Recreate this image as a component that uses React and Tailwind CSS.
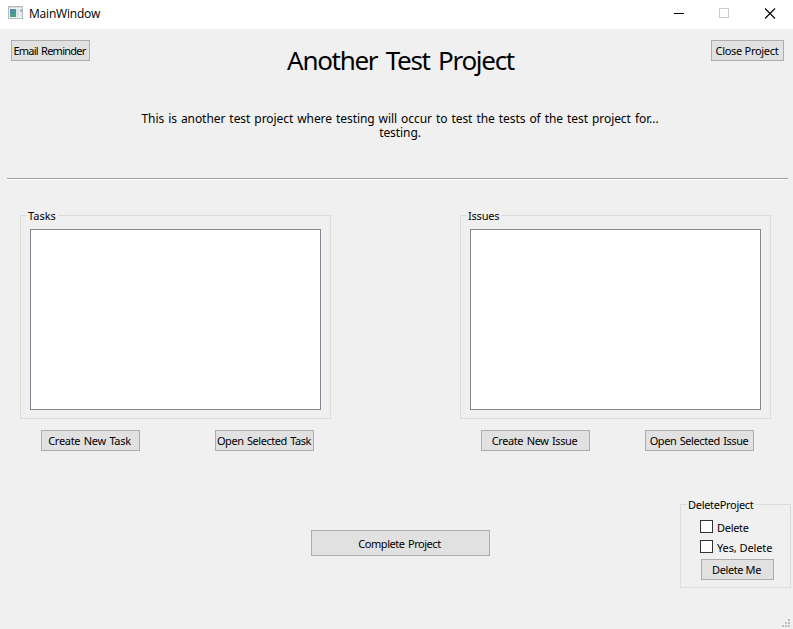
const btn =
  "flex shrink-0 items-center justify-center overflow-hidden whitespace-nowrap border border-[#adadad] bg-[#e1e1e1] text-[11px] leading-[15px]";

function Button({ className, textClass = "", children }) {
  return (
    <button className={`${btn} ${className}`}>
      <span className={textClass}>{children}</span>
    </button>
  );
}

function TitleBar() {
  return (
    <header className="flex h-[29px] items-start bg-white">
      <svg className="ml-2 mt-[6px] shrink-0" width="16" height="14" shapeRendering="crispEdges">
        <defs>
          <linearGradient id="pane" x1="0" y1="0" x2="0.6" y2="1">
            <stop offset="0" stopColor="#5585b5" />
            <stop offset="1" stopColor="#46a67c" />
          </linearGradient>
        </defs>
        <rect x="0.5" y="0.5" width="14" height="12" fill="#f4f6f6" stroke="#b4babd" />
        <rect x="1" y="1" width="13" height="1" fill="#d5dadc" />
        <rect x="2" y="3" width="6" height="8" fill="url(#pane)" />
        <rect x="8" y="3" width="3" height="8" fill="#dfe4e4" />
        <rect x="12" y="3" width="2" height="3" fill="#9cc4c4" />
        <rect x="12" y="6" width="2" height="5" fill="#e6eaea" />
      </svg>
      <span className="ml-[5px] mt-[5px] font-['Open_Sans',sans-serif] text-[12px] leading-[18px] tracking-[-0.2px]">MainWindow</span>
      <svg className="ml-auto mr-[17px] mt-2 shrink-0" width="102" height="11" fill="none">
        <path d="M0 5.5H10" stroke="#000" />
        <rect x="45.5" y="0.5" width="9" height="9" stroke="#ccc" />
        <path d="M91 0.5L101 10.5M101 0.5L91 10.5" stroke="#000" strokeWidth="1.1" />
      </svg>
    </header>
  );
}

function GroupBox({ title, className, titleClass = "", children }) {
  return (
    <section className={`border border-[#dcdcdc] ${className}`}>
      <h2 className="-mt-[8px] ml-[6px] h-[15px] w-fit whitespace-nowrap bg-[#f0f0f0] pl-px pr-[2px] text-[11px] leading-[15px]">
        <span className={titleClass}>{title}</span>
      </h2>
      {children}
    </section>
  );
}

function Check({ label, className = "", textClass = "" }) {
  return (
    <label className={`flex h-[13px] items-center text-[11px] ${className}`}>
      <span className="size-[13px] shrink-0 border border-[#333] bg-white" />
      <span className={`ml-1 mt-[2px] whitespace-nowrap leading-[15px] ${textClass}`}>{label}</span>
    </label>
  );
}

function SizeGrip() {
  return (
    <svg className="ml-auto mr-[3px] mt-[31px]" width="8" height="8" fill="#bfbfbf" shapeRendering="crispEdges">
      <path d="M6 0h2v2h-2zM3 3h2v2h-2zM6 3h2v2h-2zM0 6h2v2h-2zM3 6h2v2h-2zM6 6h2v2h-2z" />
    </svg>
  );
}

export default function App() {
  return (
    <div className="h-[629px] w-[793px] overflow-hidden bg-[#f0f0f0] font-['Noto_Sans',sans-serif] text-black">
      <TitleBar />
      <main className="flex h-[600px] flex-col">
        <div className="flex h-[83px] items-start justify-between pl-[11px] pr-[9px] pt-[11px]">
          <Button className="h-[21px] w-[79px] pr-[2px]" textClass="tracking-[-0.75px] [word-spacing:1px]">Email Reminder</Button>
          <h1 className="whitespace-nowrap text-[26px] leading-[40px] tracking-[-1.3px] [word-spacing:3px]">Another Test Project</h1>
          <Button className="h-[21px] w-[73px] pr-px" textClass="tracking-[-0.3px]">Close Project</Button>
        </div>
        <p className="h-[66px] pl-[7px] text-center text-[12px] leading-[14px] [word-spacing:1px] tracking-[-0.07px]">
          This is another test project where testing will occur to test the tests of the test project for...
          <br />
          testing.
        </p>
        <hr className="ml-[7px] mr-[5px] h-[2px] border-0 border-t border-[#a0a0a0] bg-white" />

        <div className="mt-[35px] flex gap-[129px] pl-5">
          <div className="w-[311px]">
            <GroupBox title="Tasks" className="h-[204px]">
              <div className="ml-[9px] mt-[6px] h-[181px] w-[291px] border border-[#828790] bg-white" />
            </GroupBox>
            <div className="mt-[11px] flex justify-between pl-[21px] pr-[17px]">
              <Button className="h-[21px] w-[99px] pr-[2px]" textClass="tracking-[-0.3px] [word-spacing:1px]">Create New Task</Button>
              <Button className="h-[21px] w-[99px]" textClass="-ml-px tracking-[-0.45px] [word-spacing:1px]">Open Selected Task</Button>
            </div>
          </div>
          <div className="w-[311px]">
            <GroupBox title="Issues" titleClass="tracking-[-0.2px]" className="h-[204px]">
              <div className="ml-[9px] mt-[6px] h-[181px] w-[291px] border border-[#828790] bg-white" />
            </GroupBox>
            <div className="mt-[11px] flex justify-between pl-[21px] pr-[17px]">
              <Button className="h-[21px] w-[109px] pr-[2px]" textClass="tracking-[-0.38px] [word-spacing:1px]">Create New Issue</Button>
              <Button className="h-[21px] w-[109px] pr-px" textClass="tracking-[-0.43px] [word-spacing:1px]">Open Selected Issue</Button>
            </div>
          </div>
        </div>

        <div className="mt-[53px] flex items-start pl-[311px]">
          <Button className="mt-[26px] h-[26px] w-[179px] pr-[2px]" textClass="tracking-[-0.46px] [word-spacing:1px]">Complete Project</Button>
          <GroupBox title="DeleteProject" titleClass="tracking-[-0.3px]" className="ml-[190px] h-[84px] w-[111px]">
            <div className="pl-[19px] pt-[8px]">
              <Check label="Delete" textClass="tracking-[-0.3px]" />
              <Check label="Yes, Delete" className="mt-[7px]" textClass="tracking-[-0.1px]" />
              <Button className="ml-px mt-[6px] h-[21px] w-[73px] pr-[2px]" textClass="tracking-[-0.4px]">Delete Me</Button>
            </div>
          </GroupBox>
        </div>
        <SizeGrip />
      </main>
    </div>
  );
}
